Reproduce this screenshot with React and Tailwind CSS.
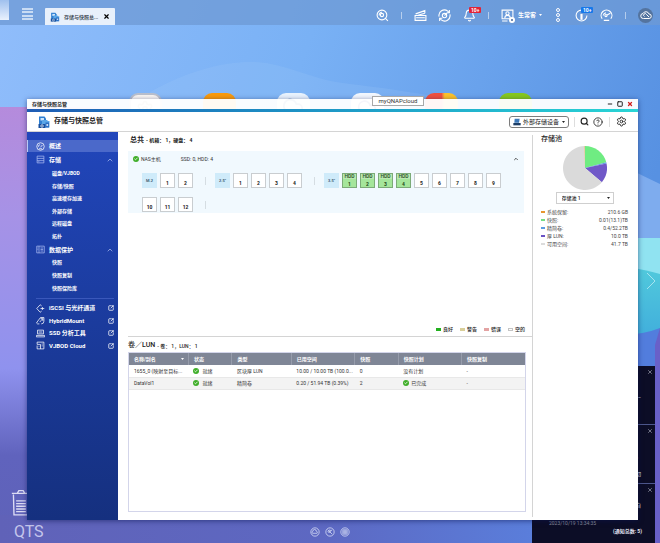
import React, { useState } from 'react';
import {
  Search,
  Bell,
  X,
  Minus,
  Square,
  Settings,
  CircleHelp,
  ChevronUp,
  Check,
  Cloud,
  SquareArrowOutUpRight,
} from 'lucide-react';

const storageItems = ['磁盘/VJBOD', '存储/快照', '高速缓存加速', '外部存储', '远程磁盘', '拓扑'];
const protectionItems = ['快照', '快照复制', '快照保险库'];

const bayGroups = [
  { label: 'M.2', bays: [1, 2] },
  { label: '2.5"', bays: [1, 2, 3, 4] },
  { label: '3.5"', bays: [1, 2, 3, 4, 5, 6, 7, 8, 9, 10, 11, 12], used: 4 },
];

const statusLegend = [
  { label: '良好', color: 'bg-[#22b01e]' },
  { label: '警告', color: 'bg-[#d9cf9a]' },
  { label: '错误', color: 'bg-[#e3a3a3]' },
  { label: '空的', color: 'border border-[#c4c4c4] bg-white' },
];

const poolRows = [
  { label: '系统保留:', value: '210.6 GB', color: 'bg-[#e8962e]' },
  { label: '快照:', value: '0.01(13.1)TB', color: 'bg-[#74dd84]' },
  { label: '精简卷:', value: '0.4/52.2TB', color: 'bg-[#5c9ce0]' },
  { label: '厚 LUN:', value: '10.0 TB', color: 'bg-[#6a52c4]' },
  { label: '可用空间:', value: '41.7 TB', color: 'bg-[#dcdcdc]' },
];

const volumes = [
  { name: '1655_0 (映射至目标...', type: '区块厚 LUN', used: '10.00 / 10.00 TB (100.0...', snaps: 0, plan: '没有计划' },
  { name: 'DataVol1', type: '精简卷', used: '0.20 / 51.94 TB (0.39%)', snaps: 2, plan: '已完成', planOk: true },
];

const slices = [
  { from: 0, to: 75, color: '#6fec82' },
  { from: 75, to: 78, color: '#5c9ce0' },
  { from: 78, to: 130, color: '#7058c8' },
  { from: 130, to: 359, color: '#dadada' },
  { from: 359, to: 360, color: '#e8962e' },
];

const arc = (from, to) => {
  const point = (deg) => {
    const a = ((deg - 90) * Math.PI) / 180;
    return `${22 + 22 * Math.cos(a)} ${22 + 22 * Math.sin(a)}`;
  };
  return `M22 22 L${point(from)} A22 22 0 ${to - from > 180 ? 1 : 0} 1 ${point(to)} Z`;
};

const Ok = () => (
  <span className="inline-flex size-[6px] shrink-0 items-center justify-center rounded-full bg-[#3fae29]">
    <Check className="size-[4px] text-white" strokeWidth={5} />
  </span>
);

const StorageLogo = ({ className }) => (
  <svg viewBox="0 0 24 26" className={className} aria-hidden="true">
    <path d="M2 2h11l3 4v14H2z" fill="#2f7fd2" />
    <path d="M5 5h7v5H5z" fill="#cfe6fb" />
    <path d="M10 9h8l2 2h3v13H8V11z" fill="#5aa7e8" />
    <path d="M1 17h14v8H1z" fill="#174f9e" />
    <circle cx="8" cy="21" r="2.5" fill="none" stroke="#fff" strokeWidth="1.4" />
    <path d="M15 14h7v10h-7z" fill="#2b6fc4" />
    <circle cx="18.5" cy="19" r="2" fill="#dbeafc" />
  </svg>
);

const Caret = ({ className }) => (
  <svg viewBox="0 0 6 4" className={className} aria-hidden="true">
    <path d="M0 0h6L3 4z" fill="currentColor" />
  </svg>
);

const Wallpaper = () => (
  <svg
    className="absolute inset-0 size-full"
    viewBox="0 0 660 543"
    preserveAspectRatio="none"
    aria-hidden="true"
  >
    <defs>
      <linearGradient id="sky" x1="0" y1="0" x2="1" y2="0.3">
        <stop offset="0" stopColor="#90bdfb" />
        <stop offset="0.45" stopColor="#79b1f5" />
        <stop offset="1" stopColor="#5791e2" />
      </linearGradient>
      <linearGradient id="dusk" x1="0" y1="0" x2="0" y2="1">
        <stop offset="0" stopColor="#b58bdc" />
        <stop offset="0.25" stopColor="#a692e6" />
        <stop offset="0.6" stopColor="#8f92ee" />
        <stop offset="0.8" stopColor="#6063bd" />
        <stop offset="1" stopColor="#5e62b8" />
      </linearGradient>
      <linearGradient id="floor" x1="0" y1="0" x2="1" y2="0">
        <stop offset="0" stopColor="#6062b8" />
        <stop offset="0.6" stopColor="#5d68c2" />
        <stop offset="1" stopColor="#5a7edb" />
      </linearGradient>
      <linearGradient id="sea" x1="0" y1="0" x2="0" y2="1">
        <stop offset="0" stopColor="#52cbdc" />
        <stop offset="1" stopColor="#3fabdc" />
      </linearGradient>
    </defs>
    <rect width="660" height="543" fill="url(#sky)" />
    <path d="M150 92C190 70 225 61 255 62C290 64 310 80 350 84C400 90 430 95 450 100V130H130Z" fill="#a5cdfb" opacity="0.18" />
    <path d="M0 107H120V543H0Z" fill="url(#dusk)" />
    <path d="M600 155L660 184V240H600Z" fill="#7eacee" />
    <rect x="600" y="238" width="60" height="40" fill="#90e3f1" />
    <path d="M600 264C620 266 640 268 660 274V345H600Z" fill="url(#sea)" />
    <path d="M600 332C620 336 640 336 660 328V543H600Z" fill="#527ddd" />
    <path d="M655 345L660 328V543H655Z" fill="#6960c8" />
    <rect y="515" width="535" height="28" fill="url(#floor)" />
    <path d="M647 273l8 8l-8 8" fill="none" stroke="#a5e4f0" strokeWidth="1" />
  </svg>
);

const TopBar = () => (
  <header className="relative flex h-[25px] items-end bg-[#6d9ad4]/75 text-white">
    <span className="h-[20px] w-[9px] self-start bg-linear-to-b from-[#9fc0ee] to-[#e9f1fd]" />
    <button type="button" aria-label="菜单" className="mb-[5px] ml-[13px] flex h-[12px] w-[11px] flex-col justify-between">
      <span className="h-[2px] w-full bg-[#c9dcf4]" />
      <span className="h-[2px] w-full bg-[#c9dcf4]" />
      <span className="h-[2px] w-full bg-[#c9dcf4]" />
      <span className="h-[2px] w-full bg-[#c9dcf4]" />
    </button>
    <div className="ml-[12px] flex h-[17px] w-[70px] items-center rounded-t-[1px] bg-[#e8f0fb] px-[5px] text-[#2a3442]">
      <StorageLogo className="size-[10px]" />
      <span className="ml-[4px] flex-1 text-[5px] leading-[8px] font-medium whitespace-nowrap">存储与快照总...</span>
      <button type="button" aria-label="关闭">
        <X className="size-[7px] text-black" strokeWidth={4} />
      </button>
    </div>

    <div className="ml-auto flex h-full items-center pt-[5px] pr-[7px]">
      <button type="button" aria-label="搜索">
        <svg viewBox="0 0 24 24" className="size-[13px]" fill="none" stroke="currentColor" strokeWidth="2">
          <circle cx="11" cy="11" r="9" />
          <path d="M6 12a5 5 0 0 1 5-6M17 17l5 5" />
          <circle cx="11" cy="11" r="3" />
        </svg>
      </button>
      <i className="mx-[12px] h-[7px] w-px bg-white/50" />
      <button type="button" aria-label="后台任务">
        <svg viewBox="0 0 24 24" className="size-[13px]" fill="none" stroke="currentColor" strokeWidth="2">
          <path d="M2 12h20v9H2zM3 9l17-6v5M6 12l14-4M4 16h16" />
        </svg>
      </button>
      <button type="button" aria-label="外部设备" className="ml-[11px]">
        <svg viewBox="0 0 24 24" className="size-[13px]" fill="none" stroke="currentColor" strokeWidth="2">
          <path d="M2 14A10 10 0 0 1 18 4l3 3M22 10A10 10 0 0 1 6 20l-3-3" />
          <circle cx="12" cy="12" r="4" />
          <path d="M12 12l5-5M21 2v5h-5M3 22v-5h5" />
        </svg>
      </button>
      <button type="button" aria-label="通知" className="relative ml-[12px]">
        <Bell className="size-[13px]" strokeWidth={2} />
        <b className="absolute -top-[2px] left-[6px] rounded-[1px] bg-[#e02438] px-[2px] text-[5px] leading-[6px]">10+</b>
      </button>
      <i className="mx-[12px] h-[7px] w-px bg-white/50" />
      <button type="button" className="relative flex items-center">
        <svg viewBox="0 0 24 24" className="size-[13px]" fill="none" stroke="currentColor" strokeWidth="2">
          <path d="M2 2h20v16H2zM2 22h10" />
          <circle cx="12" cy="8" r="3" />
          <path d="M7 17c0-7 10-7 10 0" />
        </svg>
        <span className="absolute top-[8px] left-[8px] size-[6px] rounded-full border-2 border-white bg-[#46669b]" />
        <span className="ml-[4px] text-[6px] leading-[8px] font-bold">生常客</span>
        <Caret className="ml-[3px] h-[2px] w-[3px]" />
      </button>
      <button type="button" aria-label="更多" className="ml-[14px] flex flex-col gap-px">
        <span className="size-[4px] rounded-full border border-white" />
        <span className="size-[4px] rounded-full border border-white" />
        <span className="size-[4px] rounded-full border border-white" />
      </button>
      <button type="button" aria-label="信息" className="relative ml-[15px]">
        <svg viewBox="0 0 24 24" className="size-[13px]" fill="none" stroke="currentColor" strokeWidth="2">
          <path d="M12 2a10 10 0 1 0 10 10" />
          <path d="M12 9v11" strokeWidth="4" />
        </svg>
        <b className="absolute -top-[2px] left-[6px] rounded-[1px] bg-[#1678ea] px-[2px] text-[5px] leading-[6px]">10+</b>
      </button>
      <button type="button" aria-label="仪表板" className="ml-[12px]">
        <svg viewBox="0 0 24 24" className="size-[13px]" fill="none" stroke="currentColor" strokeWidth="2">
          <path d="M4 18A10 10 0 1 1 20 18M7 21h10" />
          <circle cx="11" cy="12" r="2" />
          <path d="M13 11l6-3M6 12a6 6 0 0 1 5-5" />
        </svg>
      </button>
      <i className="mx-[12px] h-[7px] w-px bg-white/50" />
      <button type="button" aria-label="myQNAPcloud" className="flex size-[15px] items-center justify-center rounded-full bg-[#54749f]">
        <svg viewBox="0 0 24 24" className="size-[12px]" fill="none" stroke="currentColor" strokeWidth="2">
          <path d="M7 19a5 5 0 0 1-1-10a6.5 6.5 0 0 1 12 1a4.5 4.5 0 0 1 0 9z" />
          <path d="M9 15a3 3 0 1 1 4-4l5 5" />
        </svg>
      </button>
    </div>
  </header>
);

// Shortcuts on the desktop, mostly hidden under the open window
const Shortcuts = () => (
  <div className="absolute inset-x-0 top-[68px] flex justify-center gap-[41px]">
    <span className="size-[33px] rounded-[9px] border-2 border-[#b9bfcd] bg-[#fbf7f3] text-center">
      <Settings className="mx-auto mt-[5px] size-[18px] text-[#b5a698]" />
    </span>
    <span className="size-[33px] rounded-[9px] bg-[#f99a0c]" />
    <span className="size-[33px] rounded-[9px] bg-[#e9f3fe]">
      <Cloud className="mx-auto mt-[2px] size-[22px] text-[#4d7db2]" />
    </span>
    <span className="size-[33px] rounded-[9px] bg-[#f3f8ff]">
      <Cloud className="mx-auto mt-[4px] size-[20px] text-[#4b50a8]" />
    </span>
    <span className="size-[33px] rounded-[9px] bg-linear-to-r from-[#ee5140] from-50% to-[#fbc22b] to-60%" />
    <span className="size-[33px] rounded-[9px] bg-[#86c81e]" />
  </div>
);

const Notification = ({ children }) => (
  <li className="relative flex h-[59px] flex-col items-end border-b border-[#4d578c] pt-[27px] pr-[14px]">
    <button type="button" aria-label="关闭通知" className="absolute top-[3px] right-[2px]">
      <X className="size-[6px] text-[#d4d6e4]" strokeWidth={2} />
    </button>
    {children}
  </li>
);

const NavLink = ({ icon, children }) => (
  <li className="flex flex-1">
    <a href="#app" className="flex flex-1 items-center pr-[4px] pl-[9px] text-[6px] leading-[8px] font-bold">
      <svg viewBox="0 0 24 24" className="size-[9px]" fill="none" stroke="currentColor" strokeWidth="2">
        <path d={icon} />
      </svg>
      <span className="ml-[4px] flex-1 whitespace-nowrap">{children}</span>
      <SquareArrowOutUpRight className="size-[6px]" strokeWidth={3} />
    </a>
  </li>
);

const NavGroup = ({ title, icon, items, listClass }) => {
  const [open, setOpen] = useState(true);

  return (
    <div className="mt-px">
      <button
        type="button"
        aria-expanded={open}
        onClick={() => setOpen(!open)}
        className="flex h-[13px] w-full items-center pr-[4px] pl-[9px] text-[6px] leading-[8px] font-bold"
      >
        <svg viewBox="0 0 24 24" className="size-[9px] text-[#a9baf0]" fill="none" stroke="currentColor" strokeWidth="2">
          <path d={icon} />
        </svg>
        <span className="ml-[4px] flex-1 text-left">{title}</span>
        <ChevronUp className="size-[8px] text-[#b9c8f5]" strokeWidth={2} />
      </button>
      {open && (
        <ul className={listClass}>
          {items.map((item) => (
            <li key={item} className="flex flex-1 items-center pl-[25px]">
              <a href="#section" className="text-[5px] leading-[8px] font-bold">{item}</a>
            </li>
          ))}
        </ul>
      )}
    </div>
  );
};

const Sidebar = () => (
  <nav className="w-[91px] shrink-0 bg-linear-to-b from-[#2146bb] to-[#15307f] pt-[8px] text-white">
    <a
      href="#overview"
      aria-current="page"
      className="flex h-[12px] items-center border-l border-[#b9c8f5] bg-[#4b69ca] pl-[8px] text-[6px] leading-[8px] font-bold"
    >
      <svg viewBox="0 0 24 24" className="size-[9px]" fill="none" stroke="currentColor" strokeWidth="2">
        <circle cx="12" cy="12" r="10" />
        <path d="M12 14l5-6M6 13a6 6 0 0 1 5-6M8 18h8" />
      </svg>
      <span className="ml-[4px]">概述</span>
    </a>
    <NavGroup title="存储" icon="M3 3h18v18H3zM3 9h18M3 15h18M6 18h3" items={storageItems} listClass="mt-px flex h-[75px] flex-col" />
    <NavGroup title="数据保护" icon="M2 3h20v18H2zM8 3v18M12 8h7M12 12h7M12 16h7M4 8h2M4 12h2" items={protectionItems} listClass="flex h-[38px] flex-col" />
    <hr className="mt-[4px] mr-[4px] mb-[3px] ml-[9px] border-[#3a58bb]" />
    <ul className="flex h-[50px] flex-col">
      <NavLink icon="M15 5l-4-3l-9 10l9 10l4-3M12 12h10M17 8v8">iSCSI 与光纤通道</NavLink>
      <NavLink icon="M9 21H4a3 3 0 0 1-1-5l9-12h9v10a7 7 0 0 1-7 7M10 16l8-9M12 7h6v6">HybridMount</NavLink>
      <NavLink icon="M4 3h16v10H4zM1 17h22v4H1zM7 8h10">SSD 分析工具</NavLink>
      <NavLink icon="M3 9V3h18v18H3V12M3 9h9v12M7 14h2M15 8h3M15 13h3">VJBOD Cloud</NavLink>
    </ul>
  </nav>
);

const Bays = () => (
  <div className="flex flex-wrap gap-x-[3px] gap-y-[9px] pr-[10px] pl-[14px]">
    {bayGroups.map((group) => (
      <React.Fragment key={group.label}>
        <span className="flex size-[15px] items-center justify-center bg-[#cfebfa] text-[4px] leading-[6px] font-medium text-[#2c4a60]">
          {group.label}
        </span>
        {group.bays.map((bay) =>
          bay <= (group.used || 0) ? (
            <button
              key={bay}
              type="button"
              className="flex size-[15px] flex-col items-center border border-[#7cab78] bg-[#a5e69b] text-[5px] leading-[6px] text-[#1f4a1d]"
            >
              <span className="w-full bg-[#b9e8b2] leading-[5px] font-medium">HDD</span>
              <span className="mt-[2px] font-bold">{bay}</span>
            </button>
          ) : (
            <button
              key={bay}
              type="button"
              className="flex size-[15px] items-end justify-center border border-[#c9cdd0] bg-white pb-px text-[5px] leading-[6px] font-bold text-[#222]"
            >
              {bay}
            </button>
          )
        )}
        <i className="mr-[6px] ml-[9px] h-[8px] w-px self-center bg-[#d5dde2]" />
      </React.Fragment>
    ))}
  </div>
);

const VolumeTable = () => (
  <div className="mr-[7px] mb-[8px] ml-[10px] flex-1 border border-[#d3d5ea]">
    <table className="w-full table-fixed text-left text-[5px] leading-[8px] text-[#333]">
      <colgroup>
        <col className="w-[15%]" />
        <col className="w-[11%]" />
        <col className="w-[15%]" />
        <col className="w-[16%]" />
        <col className="w-[11%]" />
        <col className="w-[16%]" />
        <col className="w-[16%]" />
      </colgroup>
      <thead className="bg-[#7f8696] text-white">
        <tr className="h-[12px]">
          {['名称/别名', '状态', '类型', '已用空间', '快照', '快照计划', '快照复制'].map((head, i) => (
            <th key={head} className="border-r border-[#969cab] pl-[5px] font-bold last:border-r-0">
              <span className="flex items-center justify-between pr-[4px]">
                {head}
                {i === 0 && <Caret className="h-[2px] w-[3px]" />}
              </span>
            </th>
          ))}
        </tr>
      </thead>
      <tbody>
        {volumes.map((vol) => (
          <tr key={vol.name} className="h-[12px] border-b border-[#e8e8e8] even:bg-[#f3f3f3]">
            <td className="pl-[5px] whitespace-nowrap">{vol.name}</td>
            <td className="pl-[5px]">
              <span className="flex items-center gap-[3px]"><Ok />就绪</span>
            </td>
            <td className="pl-[5px]">{vol.type}</td>
            <td className="pl-[5px] whitespace-nowrap">{vol.used}</td>
            <td className="pl-[5px]">{vol.snaps}</td>
            <td className="pl-[5px]">
              <span className="flex items-center gap-[2px]">{vol.planOk && <Ok />}{vol.plan}</span>
            </td>
            <td className="pl-[5px]">-</td>
          </tr>
        ))}
      </tbody>
    </table>
  </div>
);

const Overview = () => (
  <main className="flex min-w-0 flex-1 flex-col">
    <h2 className="mt-[3px] ml-[12px] flex h-[10px] items-center text-[5px] leading-[8px] font-bold">
      <span className="text-[7px] leading-[9px]">总共</span>
      <span className="ml-[2px]">- 机箱： 1，硬盘： 4</span>
    </h2>
    <section className="mt-[6px] mr-[8px] ml-[10px] bg-[#f1f9fe] pb-px">
      <div className="flex h-[15px] items-center px-[5px] text-[5px] leading-[8px] text-[#333]">
        <Ok />
        <span className="ml-[2px]">NAS主机</span>
        <span className="ml-[20px]">SSD: 0, HDD: 4</span>
        <button type="button" aria-label="收起" className="ml-auto">
          <ChevronUp className="size-[6px] text-[#222]" strokeWidth={3} />
        </button>
      </div>
      <div className="pt-[7px]">
        <Bays />
      </div>
    </section>
    <ul className="mt-auto mr-[7px] mb-[3px] flex justify-end gap-[7px] text-[5px] leading-[8px] font-medium">
      {statusLegend.map((item) => (
        <li key={item.label} className="flex items-center gap-[2px]">
          <i className={`h-[3px] w-[5px] ${item.color}`} />
          {item.label}
        </li>
      ))}
    </ul>
    <section className="-mr-px ml-[10px] flex h-[184px] flex-col border-t border-[#d4d4d4]">
      <h2 className="flex h-[15px] items-center pt-[2px] text-[5px] leading-[8px] font-medium">
        <span className="text-[7px] leading-[9px]">卷／LUN</span>
        <span className="ml-[2px]">- 卷： 1，LUN： 1</span>
      </h2>
      <div className="-ml-[10px] flex flex-1 flex-col">
        <VolumeTable />
      </div>
    </section>
  </main>
);

const PoolPanel = () => (
  <aside className="my-[3px] w-[106px] shrink-0 border-l border-[#d4d4d4] pr-[10px] pl-[8px]">
    <h2 className="text-[7px] leading-[9px] font-medium">存储池</h2>
    <svg viewBox="0 0 44 44" className="mx-auto mt-[2px] size-[44px]" role="img" aria-label="存储池使用情况">
      {slices.map((s) => (
        <path key={s.from} d={arc(s.from, s.to)} fill={s.color} />
      ))}
    </svg>
    <div className="relative mx-auto mt-[2px] w-[58px]">
      <select
        aria-label="存储池"
        className="block h-[12px] w-full appearance-none border border-[#cfcfcf] bg-white pl-[5px] text-[5px] leading-[8px] font-medium"
      >
        <option>存储池 1</option>
      </select>
      <Caret className="pointer-events-none absolute top-[5px] right-[4px] h-[2px] w-[3px]" />
    </div>
    <dl className="mt-[4px] text-[5px] leading-[8px] text-[#444]">
      {poolRows.map((row) => (
        <div key={row.label} className="flex items-center">
          <i className={`mr-[2px] h-[2px] w-[4px] ${row.color}`} />
          <dt>{row.label}</dt>
          <dd className="ml-auto">{row.value}</dd>
        </div>
      ))}
    </dl>
  </aside>
);

const StorageWindow = () => (
  <div className="relative flex flex-1 flex-col text-[#222] shadow-[0_1px_5px_rgba(10,20,80,0.55)]">
    <div className="flex h-[10px] items-center bg-white/95 px-[5px]">
      <span className="flex-1 text-[5px] leading-[8px] font-bold">存储与快照总管</span>
      <div className="flex gap-[4px]">
        <button type="button" aria-label="最小化"><Minus className="size-[6px]" strokeWidth={4} /></button>
        <button type="button" aria-label="最大化"><Square className="size-[6px]" strokeWidth={4} /></button>
        <button type="button" aria-label="关闭"><X className="size-[6px] text-[#d01f1f]" strokeWidth={5} /></button>
      </div>
    </div>
    <div className="h-[3px] bg-linear-to-r from-[#1f5cb4] to-[#2ad5d5]" />
    <div className="flex h-[20px] items-center border-b border-[#d4d4d4] bg-white px-[11px]">
      <StorageLogo className="h-[14px] w-[12px]" />
      <h1 className="ml-[4px] text-[7px] leading-[9px] font-bold">存储与快照总管</h1>
      <button
        type="button"
        className="ml-auto flex h-[12px] w-[60px] items-center rounded-[3px] border border-[#7c7c7c] pl-[3px] text-[6px] leading-[8px] whitespace-nowrap"
      >
        <svg viewBox="0 0 24 24" className="size-[8px] shrink-0" aria-hidden="true">
          <path d="M5 2h15l-2 12H4z" fill="#3d78b8" />
          <path d="M1 15h22v7H1z" fill="#1d3d66" />
        </svg>
        <span className="ml-[2px] flex-1 text-left">外部存储设备</span>
        <Caret className="mr-[3px] h-[2px] w-[3px] shrink-0" />
      </button>
      <i className="mx-[5px] h-[10px] w-px bg-[#ddd]" />
      <button type="button" aria-label="查找">
        <Search className="size-[9px]" strokeWidth={3} />
      </button>
      <button type="button" aria-label="帮助" className="ml-[4px]">
        <CircleHelp className="size-[10px]" strokeWidth={2} />
      </button>
      <i className="mx-[6px] h-[10px] w-px bg-[#ddd]" />
      <button type="button" aria-label="设置">
        <Settings className="size-[11px]" strokeWidth={2} />
      </button>
    </div>
    <div className="flex flex-1 bg-white">
      <Sidebar />
      <Overview />
      <PoolPanel />
    </div>
  </div>
);

const App = () => {
  return (
    <div
      lang="zh-CN"
      className="relative flex min-h-screen flex-col overflow-hidden bg-[#6a9cea] font-[Roboto,'Noto_Sans_CJK_SC',sans-serif]"
    >
      <Wallpaper />
      <TopBar />

      <div className="relative flex flex-1 flex-col pt-[74px] pr-[22px] pb-[23px] pl-[27px]">
        <Shortcuts />

        <svg viewBox="0 0 36 50" className="absolute bottom-[27px] left-[11px] h-[27px] w-[20px]" fill="none" stroke="#dcdcf4" strokeWidth="2.5" aria-hidden="true">
          <path d="M1 8h34M11 8l3-5h8l3 5M4 10l1 38h26l1-38" />
          <path d="M9 22h18M9 27h18M9 32h18M9 37h18M9 42h18" />
        </svg>
        <span className="absolute bottom-[2px] left-[14px] text-[16px] leading-[18px] text-[#c5c6ec]">QTS</span>

        <div className="absolute inset-x-0 bottom-[6px] flex justify-center gap-[5px] text-[#d3d8f4]">
          {['M6 15a3 3 0 0 1 1-5a4 4 0 0 1 8 0a3 3 0 0 1 2 5z', 'M7 7l10 10M7 10a3 3 0 1 0 3-3M13 8h4', 'M7 7h10v10H7zM7 12h10M12 7v10'].map((d) => (
            <svg key={d} viewBox="0 0 24 24" className="size-[10px]" fill="none" stroke="currentColor" strokeWidth="2" aria-hidden="true">
              <circle cx="12" cy="12" r="10" />
              <path d={d} />
            </svg>
          ))}
        </div>

        <div className="absolute right-[5px] bottom-0 h-[177px] w-[123px] bg-[#0c0d26] text-[5px] leading-[8px] text-[#e4e5f0]">
          <ul>
            <Notification>
              <span>–</span>
            </Notification>
            <Notification>
              <span>，</span>
              <span className="mt-[10px]">切</span>
            </Notification>
          </ul>
          <button type="button" aria-label="关闭通知" className="absolute top-[121px] right-[2px]">
            <X className="size-[6px] text-[#d4d6e4]" strokeWidth={2} />
          </button>
          <p className="pt-[17px] pr-[14px] text-right">自</p>
          <p className="mt-[10px] pl-[17px] text-[#8d8f9f]">2023/10/19 13:34:35</p>
          <p className="pr-[13px] text-right font-bold">(通知总数: 5)</p>
        </div>

        <StorageWindow />

        <span
          role="tooltip"
          className="absolute top-[71px] left-[372px] w-[52px] border border-[#a8a8a8] bg-white text-center text-[6px] leading-[8px] text-[#333]"
        >
          myQNAPcloud
        </span>
      </div>
    </div>
  );
};

export default App;
